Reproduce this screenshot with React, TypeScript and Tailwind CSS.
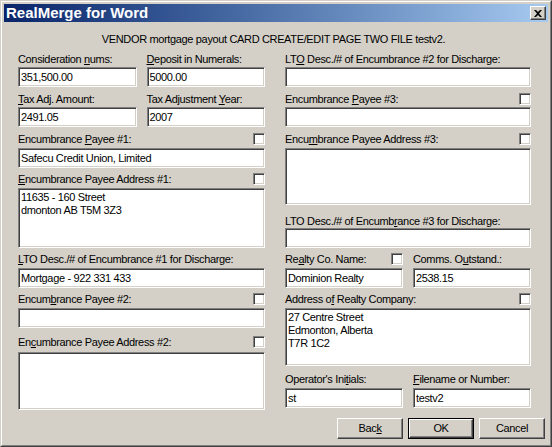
import React from "react";

const sunken =
  "bg-white border border-t-[#808080] border-l-[#808080] border-b-white border-r-white shadow-[inset_1px_1px_0_#404040,inset_-1px_-1px_0_#d4d0c8]";

function Mn({ t, u }: { t: string; u: number }) {
  return (
    <span className="whitespace-nowrap">
      {t.slice(0, u)}
      <u className="underline underline-offset-[1px]">{t.charAt(u)}</u>
      {t.slice(u + 1)}
    </span>
  );
}

function Check() {
  return (
    <div className="w-[12px] h-[12px] shrink-0 bg-white border border-t-[#808080] border-l-[#808080] border-b-white border-r-white shadow-[inset_1px_1px_0_#404040,inset_-1px_-1px_0_#d4d0c8]" />
  );
}

function Label({ t, u, h = 13, check = false }: { t: string; u: number; h?: number; check?: boolean }) {
  return (
    <div className="flex items-start justify-between leading-[13px]" style={{ height: h }}>
      <Mn t={t} u={u} />
      {check && <Check />}
    </div>
  );
}

function Input({ v = "" }: { v?: string }) {
  return (
    <div className={`${sunken} h-[20px] pl-[2px] flex items-center leading-[13px] whitespace-nowrap overflow-hidden`}>
      {v}
    </div>
  );
}

function Area({ lines = [], h }: { lines?: string[]; h: number }) {
  return (
    <div className={`${sunken} pl-[2px] pt-[2px] leading-[13px]`} style={{ height: h }}>
      {lines.map((l, i) => (
        <div key={i} className="whitespace-nowrap">
          {l}
        </div>
      ))}
    </div>
  );
}

function Btn({ children, def = false }: { children: React.ReactNode; def?: boolean }) {
  return (
    <div className={def ? "border border-black" : ""}>
      <div
        className={`${def ? "w-[64px] h-[19px]" : "w-[66px] h-[21px]"} flex items-center justify-center bg-[#d4d0c8] border border-t-white border-l-white border-r-[#404040] border-b-[#404040] shadow-[inset_-1px_-1px_0_#808080]`}
      >
        {children}
      </div>
    </div>
  );
}

export default function App() {
  return (
    <div className="w-[552px] h-[447px] bg-[#d4d0c8] border border-t-[#d4d0c8] border-l-[#d4d0c8] border-r-[#404040] border-b-[#404040] font-['Liberation_Sans',Arial,sans-serif] text-[11px] tracking-[-0.35px] text-black overflow-hidden">
      <div className="h-full border border-t-white border-l-white border-r-[#808080] border-b-[#808080] p-[2px] flex flex-col">
        {/* Title bar */}
        <div className="h-[18px] shrink-0 bg-linear-to-r from-[#0a246a] to-[#a6caf0] flex items-center justify-between pl-[2px] pr-[2px]">
          <span className="text-white font-bold text-[15px] leading-[18px] tracking-normal">RealMerge for Word</span>
          <div className="w-[16px] h-[14px] bg-[#d4d0c8] border border-t-white border-l-white border-r-[#404040] border-b-[#404040] shadow-[inset_-1px_-1px_0_#808080] flex items-center justify-center">
            <svg width="8" height="7" viewBox="0 0 8 7">
              <path d="M0 0h2l2 2 2-2h2L5 3.5 8 7H6L4 5 2 7H0l3-3.5z" fill="#000" />
            </svg>
          </div>
        </div>
        {/* Body */}
        <div className="flex-1 pl-[14px] pr-[17px]">
          <div className="mt-[11px] h-[13px] leading-[13px] text-center pr-[2px]">
            VENDOR mortgage payout CARD CREATE/EDIT PAGE TWO FILE testv2.
          </div>
          <div className="mt-[7px] flex gap-[20px]">
            {/* Left column */}
            <div className="w-[247px] flex flex-col">
              <div className="grid grid-cols-2 gap-x-[10px]">
                <div>
                  <Label t="Consideration nums:" u={14} h={14} />
                  <Input v="351,500.00" />
                </div>
                <div>
                  <Label t="Deposit in Numerals:" u={0} h={14} />
                  <Input v="5000.00" />
                </div>
              </div>
              <div className="grid grid-cols-2 gap-x-[10px] mt-[6px]">
                <div>
                  <Label t="Tax Adj. Amount:" u={0} h={14} />
                  <Input v="2491.05" />
                </div>
                <div>
                  <Label t="Tax Adjustment Year:" u={15} h={14} />
                  <Input v="2007" />
                </div>
              </div>
              <div className="mt-[6px]">
                <Label t="Encumbrance Payee #1:" u={12} h={15} check />
                <Input v="Safecu Credit Union, Limited" />
              </div>
              <div className="mt-[5px]">
                <Label t="Encumbrance Payee Address #1:" u={0} h={15} check />
                <Area h={60} lines={["11635 - 160 Street", "dmonton AB T5M 3Z3"]} />
              </div>
              <div className="mt-[5px]">
                <Label t="LTO Desc./# of Encumbrance #1 for Discharge:" u={0} h={15} />
                <Input v="Mortgage - 922 331 433" />
              </div>
              <div className="mt-[5px]">
                <Label t="Encumbrance Payee #2:" u={5} h={15} check />
                <Input />
              </div>
              <div className="mt-[8px]">
                <Label t="Encumbrance Payee Address #2:" u={2} h={16} check />
                <Area h={58} />
              </div>
            </div>
            {/* Right column */}
            <div className="w-[246px] flex flex-col">
              <div>
                <Label t="LTO Desc./# of Encumbrance #2 for Discharge:" u={2} h={14} />
                <Input />
              </div>
              <div className="mt-[6px]">
                <Label t="Encumbrance Payee #3:" u={12} h={14} check />
                <Input />
              </div>
              <div className="mt-[6px]">
                <Label t="Encumbrance Payee Address #3:" u={4} h={15} check />
                <Area h={57} />
              </div>
              <div className="mt-[10px]">
                <Label t="LTO Desc./# of Encumbrance #3 for Discharge:" u={21} h={13} />
                <Input />
              </div>
              <div className="grid grid-cols-2 gap-x-[10px] mt-[5px]">
                <div>
                  <Label t="Realty Co. Name:" u={2} h={15} check />
                  <Input v="Dominion Realty" />
                </div>
                <div>
                  <Label t="Comms. Outstand.:" u={8} h={15} />
                  <Input v="2538.15" />
                </div>
              </div>
              <div className="mt-[5px]">
                <Label t="Address of Realty Company:" u={9} h={15} check />
                <Area h={58} lines={["27 Centre Street", "Edmonton, Alberta", "T7R 1C2"]} />
              </div>
              <div className="grid grid-cols-2 gap-x-[10px] mt-[7px]">
                <div>
                  <Label t="Operator's Initials:" u={14} h={15} />
                  <Input v="st" />
                </div>
                <div>
                  <Label t="Filename or Number:" u={0} h={15} />
                  <Input v="testv2" />
                </div>
              </div>
              <div className="mt-[10px] mr-[-14px] flex justify-end gap-[5px]">
                <Btn>
                  <Mn t="Back" u={3} />
                </Btn>
                <Btn def>OK</Btn>
                <Btn>Cancel</Btn>
              </div>
            </div>
          </div>
        </div>
      </div>
    </div>
  );
}
